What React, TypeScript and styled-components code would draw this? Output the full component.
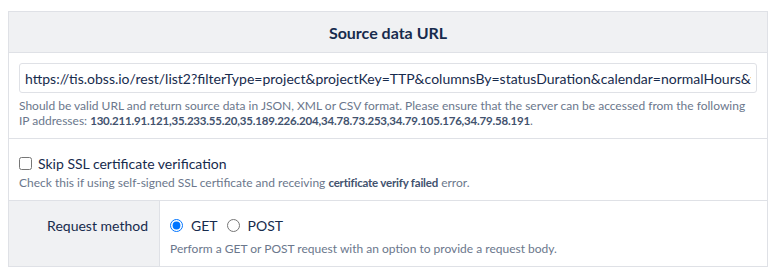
import React, { useState } from 'react';
import styled, { createGlobalStyle } from 'styled-components';

const GlobalStyle = createGlobalStyle`
  body {
    margin: 0;
    background: #ffffff;
    font-family: Lato, 'Noto Sans', sans-serif;
    color: #172b4d;
  }
`;

const sourceUrl =
  'https://tis.obss.io/rest/list2?filterType=project&projectKey=TTP&columnsBy=statusDuration&calendar=normalHours&viewFormat=days';

const ipAddresses =
  '130.211.91.121,35.233.55.20,35.189.226.204,34.78.73.253,34.79.105.176,34.79.58.191';

export const App = () => {
  const [url, setUrl] = useState(sourceUrl);
  const [skipSsl, setSkipSsl] = useState(false);
  const [method, setMethod] = useState('GET');

  return (
    <>
      <GlobalStyle />
      <Panel>
        <Header>Source data URL</Header>

        <Section>
          <UrlInput value={url} onChange={(e) => setUrl(e.target.value)} />
          <HelpText>
            Should be valid URL and return source data in JSON, XML or CSV
            format. Please ensure that the server can be accessed from the
            following IP addresses: <b>{ipAddresses}</b>.
          </HelpText>
        </Section>

        <Section>
          <CheckLabel>
            <input
              type="checkbox"
              checked={skipSsl}
              onChange={(e) => setSkipSsl(e.target.checked)}
            />
            Skip SSL certificate verification
          </CheckLabel>
          <HelpText $gap={2}>
            Check this if using self-signed SSL certificate and receiving{' '}
            <b>certificate verify failed</b> error.
          </HelpText>
        </Section>

        <FieldRow>
          <FieldLabel>Request method</FieldLabel>
          <FieldBody>
            <RadioGroup>
              {['GET', 'POST'].map((m) => (
                <RadioLabel key={m}>
                  <input
                    type="radio"
                    name="method"
                    checked={method === m}
                    onChange={() => setMethod(m)}
                  />
                  {m}
                </RadioLabel>
              ))}
            </RadioGroup>
            <HelpText $gap={6}>
              Perform a GET or POST request with an option to provide a request
              body.
            </HelpText>
          </FieldBody>
        </FieldRow>
      </Panel>
    </>
  );
};

export default App;

const Panel = styled.div`
  width: 760px;
  margin: 11px 0 0 8px;
  box-sizing: border-box;
  border: 1px solid #dfe1e6;
  border-bottom: none;
`;

const Header = styled.div`
  height: 40px;
  display: flex;
  align-items: center;
  justify-content: center;
  background: #f0f1f3;
  border-bottom: 1px solid #dfe1e6;
  font-size: 16px;
  font-weight: 700;
  color: #172b4d;
`;

const Section = styled.div`
  padding: 10px;
  border-bottom: 1px solid #dfe1e6;
`;

const UrlInput = styled.input`
  display: block;
  width: 100%;
  height: 30px;
  box-sizing: border-box;
  padding: 0 5px;
  border: 1px solid #dfe1e6;
  border-radius: 3px;
  font-family: inherit;
  font-size: 14px;
  color: #172b4d;
  outline: none;
`;

const HelpText = styled.div<{ $gap?: number }>`
  margin-top: ${(p) => p.$gap ?? 5}px;
  font-size: 12px;
  line-height: 15px;
  color: #6b778c;

  b {
    font-size: 11.5px;
    font-weight: 700;
    letter-spacing: -0.2px;
    color: #42526e;
  }
`;

const CheckLabel = styled.label`
  display: flex;
  align-items: center;
  gap: 6px;
  margin-top: 5px;
  font-size: 14px;
  line-height: 19px;
  color: #172b4d;

  input {
    margin: 0;
    width: 13px;
    height: 13px;
  }
`;

const FieldRow = styled.div`
  display: flex;
  border-bottom: 1px solid #dfe1e6;
`;

const FieldLabel = styled.div`
  width: 151px;
  flex-shrink: 0;
  box-sizing: border-box;
  padding: 15px 11px 0 0;
  text-align: right;
  background: #f0f1f3;
  border-right: 1px solid #dfe1e6;
  font-size: 14px;
  line-height: 19px;
  color: #172b4d;
`;

const FieldBody = styled.div`
  flex: 1;
  padding: 15px 10px 10px 10px;
`;

const RadioGroup = styled.div`
  display: flex;
  gap: 9px;
`;

const RadioLabel = styled.label`
  display: flex;
  align-items: center;
  gap: 8px;
  font-size: 14px;
  line-height: 19px;
  color: #172b4d;

  input {
    margin: 0;
    width: 13px;
    height: 13px;
  }
`;
